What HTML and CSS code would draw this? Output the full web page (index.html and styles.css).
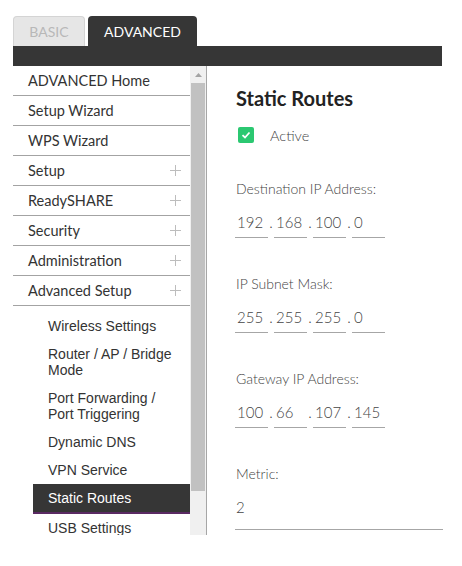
FILE: index.html
```html
<!DOCTYPE html>
<html>
<head>
<meta charset="utf-8">
<link rel="stylesheet" href="styles.css">
</head>
<body>
<div class="page">
  <div class="tabs">
    <div class="tab tab-basic">BASIC</div>
    <div class="tab tab-adv">ADVANCED</div>
  </div>
  <div class="bar"></div>
  <div class="layout">
    <div class="sidebar">
      <div class="menu">
        <div class="menu-item">ADVANCED Home</div>
        <div class="menu-item">Setup Wizard</div>
        <div class="menu-item">WPS Wizard</div>
        <div class="menu-item">Setup<svg class="plus" viewBox="0 0 11 11"><path d="M5.5 0V11M0 5.5H11"/></svg></div>
        <div class="menu-item">ReadySHARE<svg class="plus" viewBox="0 0 11 11"><path d="M5.5 0V11M0 5.5H11"/></svg></div>
        <div class="menu-item">Security<svg class="plus" viewBox="0 0 11 11"><path d="M5.5 0V11M0 5.5H11"/></svg></div>
        <div class="menu-item">Administration<svg class="plus" viewBox="0 0 11 11"><path d="M5.5 0V11M0 5.5H11"/></svg></div>
        <div class="menu-item">Advanced Setup<svg class="plus" viewBox="0 0 11 11"><path d="M5.5 0V11M0 5.5H11"/></svg></div>
        <div class="sub">
          <div class="sub-item">Wireless Settings</div>
          <div class="sub-item">Router / AP / Bridge Mode</div>
          <div class="sub-item">Port Forwarding / Port Triggering</div>
          <div class="sub-item">Dynamic DNS</div>
          <div class="sub-item">VPN Service</div>
          <div class="sub-item active">Static Routes</div>
          <div class="sub-item">USB Settings</div>
        </div>
      </div>
      <div class="scrollbar">
        <div class="sb-arrow"><svg viewBox="0 0 7 4"><path d="M3.5 0L7 4H0Z"/></svg></div>
        <div class="sb-thumb"></div>
      </div>
    </div>
    <div class="main">
      <h1 class="title">Static Routes</h1>
      <div class="check-row">
        <span class="checkbox"><svg viewBox="0 0 16 16"><path d="M4.5 8.2L7 10.5L11.5 5.5"/></svg></span>
        <span class="check-label">Active</span>
      </div>

      <div class="label">Destination IP Address:</div>
      <div class="ip">
        <span class="oct">192</span><span class="dot">.</span><span class="oct">168</span><span class="dot">.</span><span class="oct">100</span><span class="dot">.</span><span class="oct">0</span>
      </div>

      <div class="label">IP Subnet Mask:</div>
      <div class="ip">
        <span class="oct">255</span><span class="dot">.</span><span class="oct">255</span><span class="dot">.</span><span class="oct">255</span><span class="dot">.</span><span class="oct">0</span>
      </div>

      <div class="label">Gateway IP Address:</div>
      <div class="ip">
        <span class="oct">100</span><span class="dot">.</span><span class="oct">66</span><span class="dot">.</span><span class="oct">107</span><span class="dot">.</span><span class="oct">145</span>
      </div>

      <div class="label">Metric:</div>
      <div class="metric">2</div>
    </div>
  </div>
</div>
</body>
</html>
```

FILE: styles.css
```css
body {
  margin: 0;
  background: #fff;
  font-family: Lato, "Open Sans", sans-serif;
}

.page {
  padding: 16px 0 0 13px;
  width: 429px;
}

.tabs {
  display: flex;
  gap: 3px;
  height: 30px;
}

.tab {
  box-sizing: border-box;
  height: 30px;
  border-radius: 4px 4px 0 0;
  display: flex;
  align-items: center;
  justify-content: center;
  font-size: 14px;
}

.tab-basic {
  width: 72px;
  background: #e6e6e6;
  border: 1px solid #d4d4d4;
  border-bottom: none;
  color: #b8b8b8;
}

.tab-adv {
  width: 109px;
  background: #363636;
  color: #fff;
}

.bar {
  height: 20px;
  background: #363636;
}

.layout {
  display: flex;
}

.sidebar {
  display: flex;
  height: 469px;
  width: 194px;
  box-sizing: border-box;
  border-right: 1px solid #a6a6a6;
}

.menu {
  width: 177px;
  overflow: hidden;
}

.menu-item {
  box-sizing: border-box;
  height: 30px;
  border-bottom: 1px solid #a3a3a3;
  padding: 0 9px 0 15px;
  display: flex;
  align-items: center;
  justify-content: space-between;
  font-size: 14.5px;
  color: #333;
}

.plus {
  width: 11px;
  height: 11px;
  stroke: #bdbdbd;
  stroke-width: 1;
  fill: none;
}

.sub {
  padding-top: 6px;
}

.sub-item {
  margin-left: 20px;
  padding: 6px 10px 6px 15px;
  line-height: 16px;
  font-family: "Liberation Sans", Arial, sans-serif;
  font-size: 14px;
  color: #333;
}

.sub-item.active {
  background: #363636;
  color: #fff;
  border-bottom: 2px solid #5a2a63;
}

.scrollbar {
  width: 16px;
  background: #f0f0f0;
  display: flex;
  flex-direction: column;
  align-items: center;
}

.sb-arrow {
  height: 17px;
  display: flex;
  align-items: center;
  justify-content: center;
}

.sb-arrow svg {
  width: 7px;
  height: 4px;
  fill: #a3a3a3;
}

.sb-thumb {
  width: 14px;
  height: 408px;
  background: #c1c1c1;
}

.main {
  flex: 1;
  padding: 20px 0 0 28px;
}

.title {
  margin: 0 0 0 1px;
  font-size: 20px;
  line-height: 24px;
  font-weight: 700;
  color: #222;
}

.check-row {
  display: flex;
  align-items: center;
  margin-top: 17px;
  height: 16px;
}

.checkbox {
  width: 16px;
  height: 16px;
  margin-left: 3px;
  border-radius: 2px;
  background: #2bc871;
  display: flex;
}

.checkbox svg {
  width: 16px;
  height: 16px;
  fill: none;
  stroke: #fff;
  stroke-width: 1.8;
}

.check-label {
  margin-left: 16px;
  font-size: 14.5px;
  font-weight: 300;
  color: #444;
}

.label {
  margin-top: 36px;
  padding-left: 1px;
  font-size: 14px;
  line-height: 20px;
  font-weight: 300;
  color: #444;
}

.ip {
  display: flex;
  margin-top: 13px;
}

.oct {
  box-sizing: border-box;
  width: 33px;
  padding: 0 0 5px 2px;
  border-bottom: 1px solid #a6a6a6;
  font-size: 15px;
  line-height: 20px;
  font-weight: 300;
  color: #444;
}

.dot {
  width: 6px;
  text-align: center;
  font-size: 15px;
  line-height: 20px;
  font-weight: 300;
  color: #444;
}

.metric {
  margin-top: 13px;
  width: 207px;
  padding: 0 0 12px 1px;
  border-bottom: 1px solid #a6a6a6;
  font-size: 15px;
  line-height: 20px;
  font-weight: 300;
  color: #444;
}
```
